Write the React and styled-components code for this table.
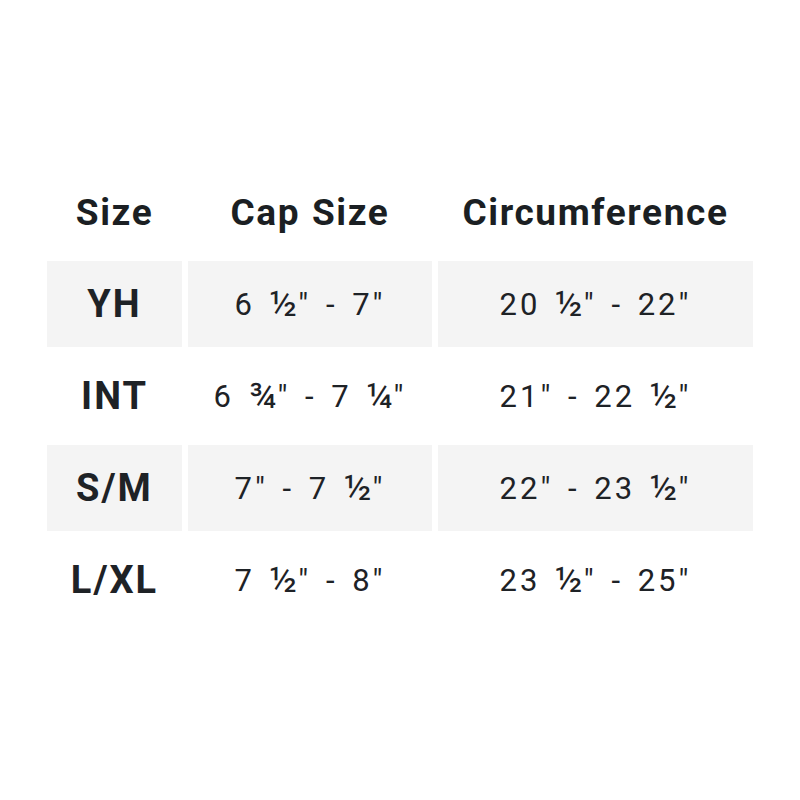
import React from "react";
import styled, { createGlobalStyle } from "styled-components";

const Global = createGlobalStyle`
  html, body { margin: 0; padding: 0; background: #ffffff; }
  body { font-family: Roboto, "Liberation Sans", sans-serif; }
`;

const Page = styled.div`
  width: 800px;
  height: 800px;
  box-sizing: border-box;
  padding-top: 169px;
  display: flex;
  justify-content: center;
`;

const Table = styled.div`
  display: grid;
  grid-template-columns: 135px 244px 315px;
  grid-auto-rows: 86px;
  column-gap: 6px;
  row-gap: 6px;
  width: 706px;
`;

const HeadCell = styled.div`
  display: flex;
  align-items: center;
  justify-content: center;
  font-size: 37px;
  font-weight: 700;
  color: #1b1f23;
  letter-spacing: 1.6px;
  word-spacing: 1px;
`;

const Cell = styled.div`
  display: flex;
  align-items: center;
  justify-content: center;
  background: ${(p) => (p.$shaded ? "#f4f4f4" : "transparent")};
  font-size: ${(p) => (p.$label ? "38px" : "31px")};
  font-weight: ${(p) => (p.$label ? 700 : 400)};
  color: #1e2226;
  letter-spacing: ${(p) => (p.$label ? "2px" : "3px")};
  word-spacing: ${(p) => (p.$label ? "0" : "4px")};
  white-space: pre;
`;

const Frac = styled.span`
  font-size: 1.15em;
  letter-spacing: 1px;
`;

function Value({ text }) {
  const parts = text.split(/([½¼¾])/);
  return parts.map((p, i) =>
    /[½¼¾]/.test(p) ? <Frac key={i}>{p}</Frac> : <React.Fragment key={i}>{p}</React.Fragment>
  );
}

const rows = [
  ["YH", "6 ½\" - 7\"", "20 ½\" - 22\""],
  ["INT", "6 ¾\" - 7 ¼\"", "21\" - 22 ½\""],
  ["S/M", "7\" - 7 ½\"", "22\" - 23 ½\""],
  ["L/XL", "7 ½\" - 8\"", "23 ½\" - 25\""],
];

export default function App() {
  return (
    <>
      <Global />
      <Page>
        <Table>
          <HeadCell>Size</HeadCell>
          <HeadCell>Cap Size</HeadCell>
          <HeadCell>Circumference</HeadCell>
          {rows.map((r, i) => (
            <React.Fragment key={r[0]}>
              <Cell $label $shaded={i % 2 === 0}>{r[0]}</Cell>
              <Cell $shaded={i % 2 === 0}><Value text={r[1]} /></Cell>
              <Cell $shaded={i % 2 === 0}><Value text={r[2]} /></Cell>
            </React.Fragment>
          ))}
        </Table>
      </Page>
    </>
  );
}
